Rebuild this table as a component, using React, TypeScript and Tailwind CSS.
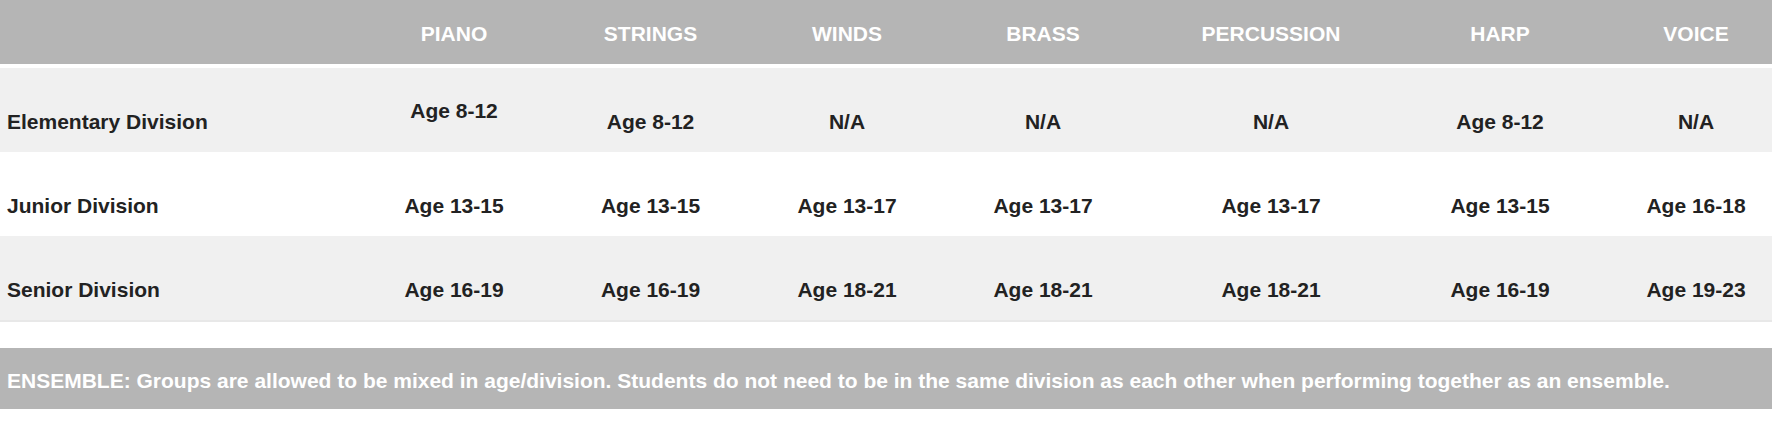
import React from "react";

const columns = ["PIANO", "STRINGS", "WINDS", "BRASS", "PERCUSSION", "HARP", "VOICE"];

const rows = [
  {
    name: "Elementary Division",
    ages: ["Age 8-12", "Age 8-12", "N/A", "N/A", "N/A", "Age 8-12", "N/A"],
    bg: "bg-[#f0f0f0]",
  },
  {
    name: "Junior Division",
    ages: ["Age 13-15", "Age 13-15", "Age 13-17", "Age 13-17", "Age 13-17", "Age 13-15", "Age 16-18"],
    bg: "bg-white",
  },
  {
    name: "Senior Division",
    ages: ["Age 16-19", "Age 16-19", "Age 18-21", "Age 18-21", "Age 18-21", "Age 16-19", "Age 19-23"],
    bg: "bg-[#f0f0f0]",
  },
];

const grid = "grid grid-cols-[356px_196px_197px_196px_196px_260px_198px_194px]";

function App() {
  return (
    <div className="w-[1772px] h-[437px] overflow-hidden bg-white font-['Liberation_Sans',Arial,sans-serif] font-bold text-[21px] leading-6">
      <div className={`${grid} h-16 items-center bg-[#b5b5b5] text-white`}>
        <div />
        {columns.map((c) => (
          <div key={c} className="text-center pt-1">
            {c}
          </div>
        ))}
      </div>
      <div className="mt-1 border-b-2 border-[#e8e8e8]">
        {rows.map((r, i) => (
          <div key={r.name} className={`${grid} h-[84px] items-center ${r.bg} text-[#222]`}>
            <div className="pl-[7px] pt-6">{r.name}</div>
            {r.ages.map((a, j) => (
              <div key={j} className={`text-center ${i === 0 && j === 0 ? "pt-0.5" : "pt-6"}`}>
                {a}
              </div>
            ))}
          </div>
        ))}
      </div>
      <div className="mt-[26px] h-[61px] flex items-center bg-[#b5b5b5] pl-[7px] pt-1 text-white">
        ENSEMBLE: Groups are allowed to be mixed in age/division. Students do not need to be in the same division as each
        other when performing together as an ensemble.
      </div>
    </div>
  );
}

export default App;
